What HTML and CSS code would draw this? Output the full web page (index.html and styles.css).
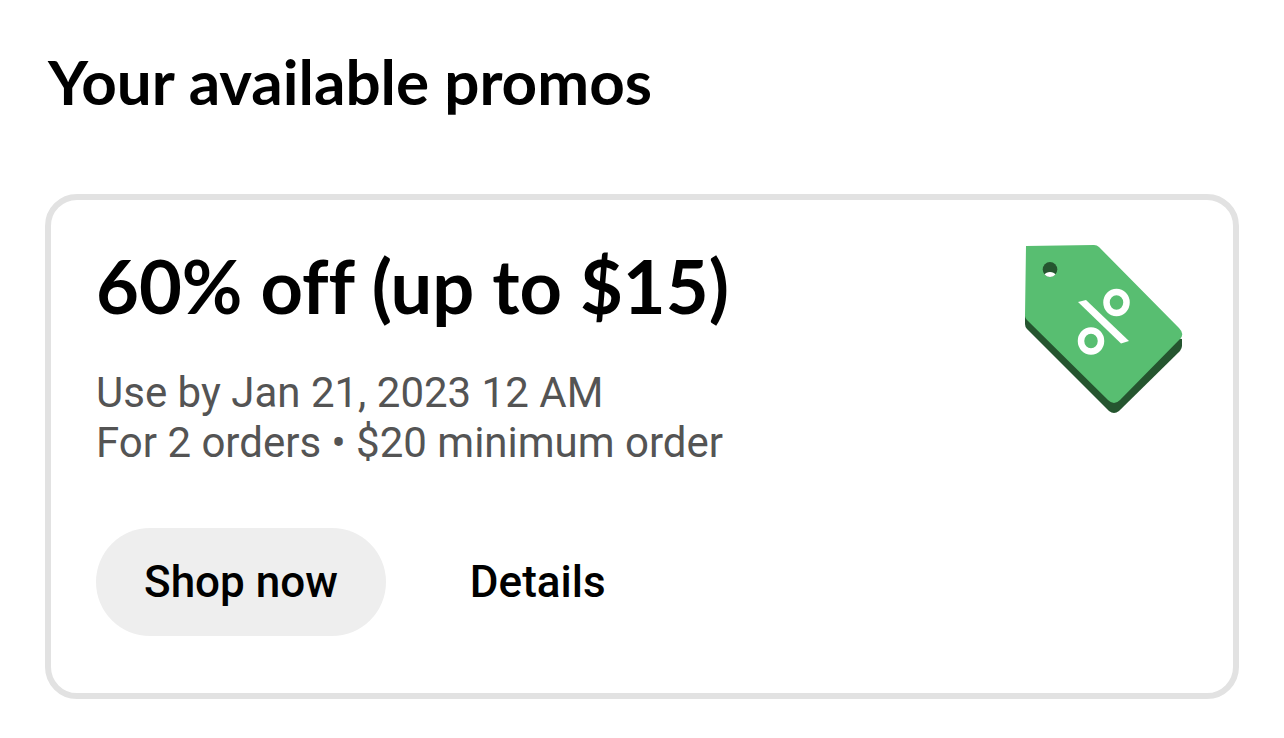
FILE: index.html
```html
<!DOCTYPE html>
<html lang="en">
<head>
    <meta charset="UTF-8">
    <meta name="viewport" content="width=device-width, initial-scale=1.0">
    <title>Your available promos</title>
    <link rel="stylesheet" href="styles.css">
</head>
<body>
    <main class="promos">
        <h1>Your available promos</h1>

        <article class="promo-card">
            <div class="promo-info">
                <h2>60% off (up to $15)</h2>
                <p>Use by Jan 21, 2023 12 AM</p>
                <p>For 2 orders • $20 minimum order</p>
                <div class="promo-actions">
                    <button type="button" class="btn btn-filled">Shop now</button>
                    <button type="button" class="btn">Details</button>
                </div>
            </div>

            <svg class="promo-tag" viewBox="0 0 158 170" aria-hidden="true">
                <path fill="#25552f" d="M0 70V80Q0 83 2 85L84 167Q89 171 94 167L155 107Q157 104 157 102V95Z"/>
                <path fill="#58be71" d="M1 2L69 1Q72 1 74 3L154 84Q160 90 155 95L95 156Q89 162 83 156L2 76Q0 74 0 72Z"/>
                <ellipse cx="25" cy="25.5" rx="7.3" ry="7.5" fill="#25552f"/>
                <path fill="#fff" d="M19.500 30.500Q21 28 25 28Q29 28 30.500 30.500Q28 33 25 33Q22 33 19.500 30.500Z"/>
                <g fill="none" stroke="#fff" stroke-width="6.500">
                    <ellipse cx="91.500" cy="58.500" rx="10" ry="10.500"/>
                    <ellipse cx="66" cy="97" rx="10" ry="10.500"/>
                </g>
                <path fill="#fff" d="M53 58L61 56L104 97L96 99.500Z"/>
            </svg>
        </article>
    </main>
</body>
</html>
```
FILE: styles.css
```css
* {
    box-sizing: border-box;
}
body {
    margin: 0;
    background: #fff;
    color: #000;
    font-family: Roboto, "Liberation Sans", sans-serif;
}
.promos {
    padding: 45px 45px 39px;
}
h1, h2, p {
    margin: 0;
}
h1, h2 {
    font-family: Lato, "Open Sans", sans-serif;
    font-weight: 700;
    font-variant-ligatures: none;
}
h1 {
    font-size: 62px;
    line-height: 72px;
    padding-left: 3px;
    margin-bottom: 77px;
}
h2 {
    font-size: 74px;
    line-height: 84px;
    margin-bottom: 40px;
}
.promo-card {
    display: flex;
    justify-content: space-between;
    align-items: flex-start;
    gap: 24px;
    padding: 44px 50px 57px 45px;
    border: 6px solid #e2e2e2;
    border-radius: 32px;
}
.promo-info p {
    color: #545454;
    font-size: 42px;
    line-height: 50px;
}
.promo-actions {
    display: flex;
    flex-wrap: wrap;
    gap: 36px;
    margin-top: 60px;
}
.btn {
    height: 108px;
    padding: 0 48px;
    border: none;
    border-radius: 54px;
    background: transparent;
    color: #000;
    font-family: inherit;
    font-size: 44px;
    font-weight: 500;
    cursor: pointer;
}
.btn-filled {
    background: #eee;
}
.promo-tag {
    flex: none;
    width: 158px;
    height: 170px;
}
```
